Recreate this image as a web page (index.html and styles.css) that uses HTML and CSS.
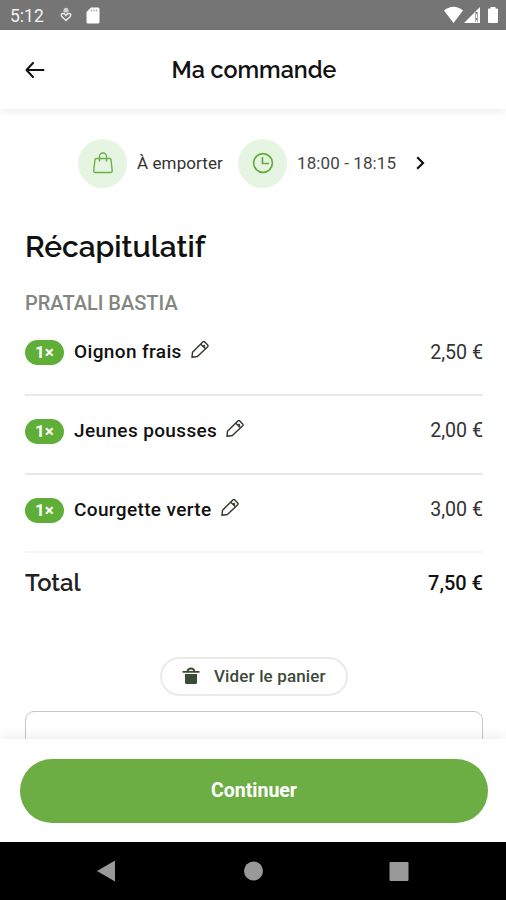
FILE: index.html
```html
<!DOCTYPE html>
<html lang="fr">
<head>
<meta charset="utf-8">
<meta name="viewport" content="width=device-width, initial-scale=1">
<title>Ma commande</title>
<link rel="stylesheet" href="styles.css">
</head>
<body>
<div class="status">
  <span class="clock">5:12</span>
  <svg class="debug" width="12" height="16" viewBox="0 0 12 16" fill="none" stroke="#e4e4e4" stroke-width="1.5"><path d="M3.500 5.500V3.300a2.500 2.500 0 0 1 5 0v2.200z" fill="#d0d0d0" stroke="none"/><path d="M6 13.500 1.800 9.600Q.3 6.600 3 6.600q2 0 3 1.900 1-1.900 3-1.900 2.700 0 1.200 3z"/></svg>
  <svg class="card" width="14" height="17" viewBox="0 0 14 17"><path d="M5 .5h7a1.500 1.500 0 0 1 1.500 1.500v13a1.500 1.500 0 0 1-1.500 1.500H2A1.500 1.500 0 0 1 .5 15V5z" fill="#fff"/><path d="M5.500 2.500v2M8 2.500v2M10.500 2.500v2" stroke="#aaa" stroke-width="1.300"/></svg>
  <svg class="signals" width="56" height="18" viewBox="0 0 56 18"><path d="M0 4.500Q9.500-3 19 4.500L9.500 17z" fill="#fff"/><path d="M20 17 36 1v16z" fill="#fff"/><path d="M32.500 6v10" stroke="#777" stroke-width="2.200"/><path d="M32.500 8v4M32.500 14v2" stroke="#fff" stroke-width="1"/><path d="M46.500 1h5v1.500H53q1 0 1 1V16q0 1-1 1h-8q-1 0-1-1V3.500q0-1 1-1h1.500z" fill="#fff"/></svg>
</div>
<header class="header">
  <svg class="back" width="20" height="16" viewBox="0 0 20 16" fill="none" stroke="#111" stroke-width="2" stroke-linecap="round" stroke-linejoin="round"><path d="M18.500 8H1.500M8 1 1.500 8 8 15"/></svg>
  <h1 class="title">Ma commande</h1>
</header>
<main class="content">
  <div class="slot">
    <span class="disc"><svg width="20" height="22" viewBox="0 0 20 22" fill="none" stroke="#6db04b" stroke-width="1.400" stroke-linejoin="round" stroke-linecap="round"><path d="M3.200 6.500h13.600q1 0 1.200 1l1.200 10.800q.2 2.200-1.700 2.200H2.500q-1.900 0-1.700-2.200L2 7.500q.2-1 1.200-1z"/><path d="M6.500 9V4.500a3.500 3.500 0 0 1 7 0V9"/></svg></span>
    <span class="pickup">À emporter</span>
    <span class="disc"><svg width="22" height="22" viewBox="0 0 22 22" fill="none" stroke="#65ab3c" stroke-width="1.700"><circle cx="11" cy="11" r="9.400"/><path d="M10.500 5v6.500H17"/></svg></span>
    <span class="hours">18:00 - 18:15</span>
    <svg class="chevron" width="9" height="14" viewBox="0 0 9 14" fill="none" stroke="#111" stroke-width="2.200"><path d="m1.200 1.300 5.800 5.700-5.800 5.700"/></svg>
  </div>
  <h2 class="summary">Récapitulatif</h2>
  <h3 class="shop">PRATALI BASTIA</h3>
  <div class="item"><span class="qty">1×</span><span class="name">Oignon frais</span><svg class="pen" width="20" height="20" viewBox="0 0 20 20"><use href="#pen"/></svg><span class="price">2,50 €</span></div>
  <div class="item"><span class="qty">1×</span><span class="name">Jeunes pousses</span><svg class="pen" width="20" height="20" viewBox="0 0 20 20"><use href="#pen"/></svg><span class="price">2,00 €</span></div>
  <div class="item last"><span class="qty">1×</span><span class="name">Courgette verte</span><svg class="pen" width="20" height="20" viewBox="0 0 20 20"><use href="#pen"/></svg><span class="price">3,00 €</span></div>
  <div class="total"><span class="total-label">Total</span><span class="total-price">7,50 €</span></div>
  <button class="clear"><svg width="18" height="18" viewBox="0 0 18 18" fill="#3c4a38"><path d="M3 7h12v8.500q0 1.500-1.500 1.500h-9Q3 17 3 15.500z"/><path d="M.5 4.800h17M5.500 4.500Q6 1.500 9 1.500t3.500 3" fill="none" stroke="#3c4a38" stroke-width="1.800"/></svg><span class="clear-label">Vider le panier</span></button>
  <div class="note"></div>
</main>
<footer class="footer"><button class="continue"><span class="continue-label">Continuer</span></button></footer>
<nav class="nav">
  <svg width="506" height="58" viewBox="0 0 506 58" fill="#999"><path d="M97 29 115 18.500v21z"/><circle cx="253.500" cy="29" r="9.500"/><rect x="389.500" y="20" width="19" height="19" rx="1"/></svg>
</nav>
<svg width="0" height="0" class="defs"><defs><g id="pen" fill="none" stroke="#2c3828" stroke-width="1.400" stroke-linejoin="round"><path d="M2 17.300 2.500 12.300 12.800 2.100q1-1 2 0L17.700 4.900q.9.900 0 1.900L7.400 16.500z"/><path d="m10.800 4.300 4.700 4.500M13.500 5l1.500 1.500"/></g></defs></svg>
</body>
</html>
```

FILE: styles.css
```css
* { box-sizing: border-box; }
body { margin: 0; height: 900px; overflow: hidden; display: flex; flex-direction: column; background: #fff; font-family: Roboto, "Liberation Sans", sans-serif; color: #111; }
h1, h2, h3 { margin: 0; }
span, h1, h2, h3 { white-space: nowrap; }
svg { display: block; flex: none; }
button { font: inherit; cursor: pointer; }
.defs { position: absolute; }
.status { flex: none; height: 30px; background: #757575; display: flex; align-items: center; padding: 0 6px 0 10px; }
.clock { width: 50px; font-size: 17.500px; color: #f4f4f4; padding-top: 1px; }
.card { margin-left: 14px; }
.signals { margin-left: auto; }
.header { flex: none; height: 79px; display: grid; grid-template-columns: 60px 1fr 58px; align-items: center; box-shadow: 0 2px 8px rgba(0, 0, 0, .08); }
.back { margin-left: 25px; }
.title { font: 650 23.300px/30px Raleway, Lato, sans-serif; text-align: center; }
.content { height: 630px; overflow: hidden; padding: 29px 23px 0 25px; display: flex; flex-direction: column; }
.slot { flex: none; height: 50px; display: flex; align-items: center; padding-left: 53px; font-size: 17px; color: #333; }
.disc { flex: none; width: 49px; height: 49px; border-radius: 50%; background: #e6f5e1; display: grid; place-items: center; }
.pickup { width: 111px; padding-left: 10px; letter-spacing: .1px; }
.hours { width: 128px; padding-left: 10px; color: #444; letter-spacing: .1px; }
.chevron { margin-left: 1px; }
.summary { flex: none; margin-top: 39px; font: 650 29.900px/40px Raleway, Lato, sans-serif; }
.shop { flex: none; margin-top: 24px; font-size: 20px; line-height: 24px; font-weight: 500; color: #818680; }
.item { flex: none; height: 79px; border-bottom: 2px solid #e6e9e5; display: flex; align-items: flex-start; padding-top: 22px; line-height: 26px; }
.shop + .item { padding-top: 24px; height: 81px; }
.last { height: 78px; border-color: #f4f5f4; }
.qty { width: 39px; height: 25px; margin-top: 1px; border-radius: 13px; background: #5fae37; color: #fff; font-size: 17px; line-height: 25px; font-weight: 700; text-align: center; }
.name { margin-left: 10px; font-size: 19px; font-weight: 500; letter-spacing: .37px; }
.pen { margin-left: 8px; margin-top: 1px; }
.price { margin-left: auto; font-size: 19.600px; color: #333; }
.shop + .item .price { padding-top: 1px; }
.total { flex: none; display: flex; justify-content: space-between; align-items: center; height: 61px; }
.total-label { font: 650 23.800px/30px Raleway, Lato, sans-serif; color: #222; margin-top: -1px; }
.total-price { font-size: 20px; font-weight: 500; margin-top: -1px; }
.clear { flex: none; align-self: center; width: 188px; height: 39px; margin-top: 43px; padding: 0 19px 2px 20px; border: 2px solid #e8ece6; border-radius: 20px; background: #fff; display: flex; align-items: center; gap: 14px; color: #3c4a38; font-size: 17px; font-weight: 500; letter-spacing: .15px; }
.note { flex: none; height: 80px; margin-top: 15px; border: 1px solid #c4c7c4; border-radius: 9px; }
.footer { position: relative; flex: none; height: 103px; padding: 20px 18px 0 20px; background: #fff; box-shadow: 0 -3px 12px rgba(0, 0, 0, .07); }
.continue { width: 100%; height: 64px; padding: 0 0 2px; border: 0; border-radius: 32px; background: #6cae43; color: #fff; font-size: 19.500px; font-weight: 700; }
.nav { position: relative; flex: none; height: 58px; background: #000; }
```
